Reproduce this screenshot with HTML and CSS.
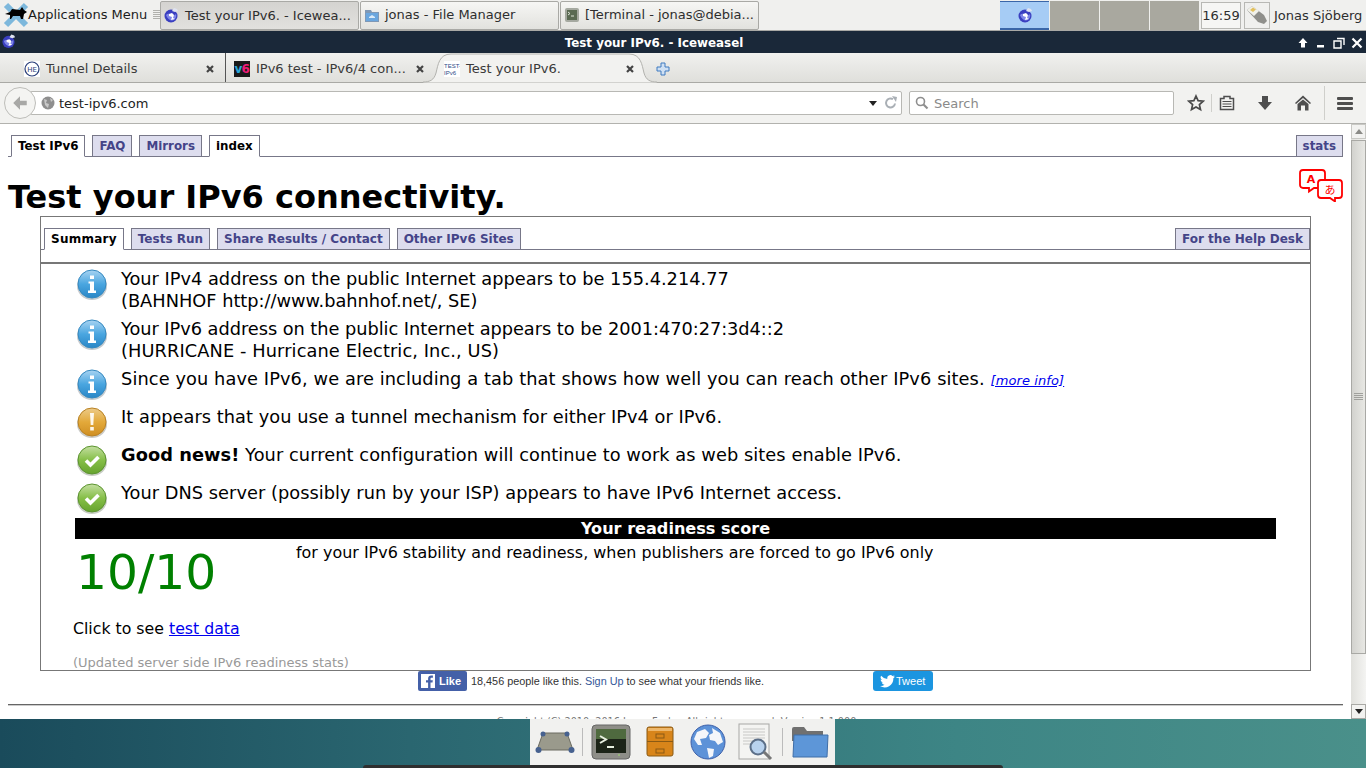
FILE: index.html
```html
<!DOCTYPE html>
<html lang="en">
  <head>
    <meta charset="UTF-8" />
    <title>Test your IPv6. - Iceweasel</title>
    <link rel="stylesheet" href="styles.css">
  </head>

  <body>
    <svg class="defs" width="0" height="0">
      <defs>
        <linearGradient id="gBlue" x1="0" y1="0" x2="0" y2="1">
          <stop offset="0" stop-color="#a9d4f2" /><stop offset="0.5" stop-color="#4aa6e0" /><stop offset="1" stop-color="#2a86c6" />
        </linearGradient>
        <linearGradient id="gOrange" x1="0" y1="0" x2="0" y2="1">
          <stop offset="0" stop-color="#eccb8a" /><stop offset="0.5" stop-color="#e3a93a" /><stop offset="1" stop-color="#cf8e22" />
        </linearGradient>
        <linearGradient id="gGreen" x1="0" y1="0" x2="0" y2="1">
          <stop offset="0" stop-color="#c4dfa2" /><stop offset="0.5" stop-color="#86bf48" /><stop offset="1" stop-color="#66a32e" />
        </linearGradient>
        <symbol id="weasel" viewBox="0 0 16 16">
          <circle cx="8" cy="9" r="6.500" fill="#3a3fc0" />
          <path d="M3 8c2-2 4-1 5 0s3 1 5-1c1 3-1 6-4 6.500-2 0-5-2-6-5.500z" fill="#7f86e8" />
          <path d="M6 7l3-1 2 2-1 3 2 1-4 1 1-3-3-1z" fill="#fff" />
          <path d="M9 4l2-3 3 1 1 2-3 1z" fill="#dfe3f0" />
        </symbol>
        <symbol id="close" viewBox="0 0 10 10">
          <path d="M2 2l6 6M8 2l-6 6" stroke="#444" stroke-width="2.200" fill="none" />
        </symbol>
        <symbol id="info" viewBox="0 0 32 32">
          <ellipse cx="16" cy="18" rx="15" ry="14" fill="#6d7a84" opacity="0.4" />
          <circle cx="16" cy="16" r="14" fill="url(#gBlue)" stroke="#3589c0" />
          <path d="M14 7.500h4v3.500h-4zM12.500 13.500h5.500v9h2v2.500h-8v-2.500h2v-7h-1.500z" fill="#fff" />
        </symbol>
        <symbol id="warn" viewBox="0 0 32 32">
          <ellipse cx="16" cy="18" rx="15" ry="14" fill="#7b7b70" opacity="0.4" />
          <circle cx="16" cy="16" r="14" fill="url(#gOrange)" stroke="#b98224" />
          <path d="M14 7h4l-.7 12h-2.600zM14.200 21h3.600v3.600h-3.600z" fill="#fff" opacity="0.9" />
        </symbol>
        <symbol id="ok" viewBox="0 0 32 32">
          <ellipse cx="16" cy="18" rx="15" ry="14" fill="#74806a" opacity="0.4" />
          <circle cx="16" cy="16" r="14" fill="url(#gGreen)" stroke="#5c9430" />
          <path d="M10 16.500l4.500 4.500 8-8" fill="none" stroke="#fff" stroke-width="3.600" />
        </symbol>
      </defs>
    </svg>

    <!-- xfce panel -->
    <div class="panel">
      <div class="appmenu">
        <svg class="xfce" viewBox="0 0 26 26">
          <path d="M3 3l20 20M23 3L3 23" stroke="#7db8dc" stroke-width="6" />
          <path d="M2 12l5-2 2-3 8 1 2-3 2 3 3 2-3 2-1 5h-2l-1-3-7 0-2 3H7l0-4z" fill="#000" />
        </svg>
        <span>Applications Menu</span>
      </div>
      <div class="grip"></div>
      <div class="tasks">
        <div class="task task-active"><svg class="ico16"><use href="#weasel" /></svg><span>Test your IPv6. - Icewea...</span></div>
        <div class="task">
          <svg class="ico16" viewBox="0 0 16 16"><path d="M1 3h6l1 2h7v10H1z" fill="#7f98b5" /><rect x="2" y="6" width="12" height="8" fill="#6aa6de" /><path d="M5 10l3-2 3 2v1H5z" fill="#dcebf8" /></svg>
          <span>jonas - File Manager</span>
        </div>
        <div class="task">
          <svg class="ico16" viewBox="0 0 16 16"><rect x="1" y="1" width="14" height="14" rx="2" fill="#a5a9a0" /><rect x="3" y="3" width="10" height="10" fill="#5a6a52" /><path d="M4 5l2 1.500L4 8M7 9h3" stroke="#dfe6d8" fill="none" /></svg>
          <span>[Terminal - jonas@debia...</span>
        </div>
      </div>
      <div class="pager">
        <div class="desk desk-on"><svg class="ico16"><use href="#weasel" /></svg></div>
        <div class="desk"></div>
        <div class="desk"></div>
        <div class="desk"></div>
      </div>
      <div class="clock">16:59</div>
      <div class="usb">
        <svg viewBox="0 0 24 24" width="24" height="24"><path d="M2 7l5-4 12 9 3 6-3 3-6-2z" fill="#8f8f8b" /><path d="M2 7l5-4 7 5-5 5z" fill="#f1f1ea" /><path d="M5 7l3-2.500 3 2-3 2.500z" fill="#e2c05e" /></svg>
      </div>
      <div class="user">Jonas Sjöberg</div>
    </div>

    <!-- window title -->
    <div class="titlebar">
      <svg class="title-ico"><use href="#weasel" /></svg>
      <div class="title-text">Test your IPv6. - Iceweasel</div>
      <div class="winbtns">
        <svg viewBox="0 0 12 12" width="12" height="12"><path d="M6 1l4.500 5H8v4.500H4V6H1.500z" fill="#fff" /></svg>
        <svg viewBox="0 0 12 12" width="12" height="12"><path d="M2 8h7v2.500H2z" fill="#fff" /></svg>
        <svg viewBox="0 0 12 12" width="12" height="12"><path d="M4 1.500h7v6.500M1 4h7v7H1z" fill="none" stroke="#fff" stroke-width="1.400" /></svg>
        <svg viewBox="0 0 12 12" width="12" height="12"><path d="M1.500 1.500l9 9M10.500 1.500l-9 9" stroke="#fff" stroke-width="2.200" /></svg>
      </div>
    </div>

    <!-- browser tabs -->
    <div class="tabbar">
      <div class="btab btab-first">
        <svg class="favicon" viewBox="0 0 16 16"><rect width="16" height="16" fill="#fff" /><circle cx="8" cy="8" r="7" fill="#fff" stroke="#2a3f7a" stroke-width="1.200" /><text x="8" y="11" class="fav-he">HE</text></svg>
        <span class="btab-label">Tunnel Details</span>
        <svg class="btab-close"><use href="#close" /></svg>
      </div>
      <div class="btab btab-second">
        <svg class="favicon" viewBox="0 0 16 16"><rect width="16" height="16" fill="#1a1a1a" /><text x="0.500" y="12" class="fav-v">v</text><text x="7.500" y="12" class="fav-six">6</text></svg>
        <span class="btab-label">IPv6 test - IPv6/4 con...</span>
        <svg class="btab-close"><use href="#close" /></svg>
      </div>
      <div class="btab btab-active">
        <svg class="tab-shape" viewBox="0 0 234 30" width="234" height="30"><path d="M0 29C7 29 11 27 13 20 15 12 16 1 28 1H206C218 1 219 12 221 20 223 27 227 29 234 29V30H0z" fill="#f2f2f0" stroke="#b2b2ae" /></svg>
        <svg class="favicon" viewBox="0 0 16 16"><rect width="16" height="16" fill="#fff" /><text x="0" y="6.500" class="fav-test">TEST-</text><text x="0" y="13.500" class="fav-test">IPv6</text></svg>
        <span class="btab-label">Test your IPv6.</span>
        <svg class="btab-close"><use href="#close" /></svg>
      </div>
      <svg class="newtab" viewBox="0 0 14 14" width="14" height="14"><path d="M5 1h4v4h4v4H9v4H5V9H1V5h4z" fill="#cfe0f3" stroke="#3f7ac0" /></svg>
    </div>

    <!-- location bar -->
    <div class="navbar">
      <div class="back">
        <svg viewBox="0 0 16 16" width="18" height="18"><path d="M8 2L2 8l6 6V10h6V6H8z" fill="#a8a8a6" /></svg>
      </div>
      <div class="urlbar">
        <svg class="globe" viewBox="0 0 14 14" width="14" height="14"><circle cx="7" cy="7" r="6.500" fill="#8e8e8e" /><path d="M3 3l3 1-1 3 3 1-1 4-3-3zM9 2l3 2-2 2z" fill="#c8c8c8" /></svg>
        <span class="url">test-ipv6.com</span>
        <span class="url-drop"></span>
        <svg viewBox="0 0 14 14" width="14" height="14"><path d="M11 7.500A4.500 4.500 0 1 1 9 3.200" fill="none" stroke="#a9afb5" stroke-width="2" /><path d="M8 0l5 1-1 5z" fill="#a9afb5" /></svg>
      </div>
      <div class="searchbar">
        <svg viewBox="0 0 14 14" width="14" height="14"><circle cx="5.500" cy="5.500" r="4" fill="none" stroke="#8e8e8e" stroke-width="1.600" /><path d="M8.500 8.500l4 4" stroke="#8e8e8e" stroke-width="2.200" /></svg>
        <span>Search</span>
      </div>
      <div class="tools">
        <svg class="tool-star" viewBox="0 0 18 18" width="18" height="18"><path d="M9 2l2.100 4.700 5.100.5-3.800 3.400 1.100 5L9 13l-4.500 2.600 1.100-5L1.800 7.200l5.100-.5z" fill="none" stroke="#4a4a4a" stroke-width="1.700" /></svg>
        <i class="tool-sep tool-sep-a"></i>
        <svg class="tool-list" viewBox="0 0 16 16" width="16" height="16"><path d="M1.500 3.500h3.500V1.500h6v2h3.500v11h-13z" fill="#f2f2f0" stroke="#4e4e4e" stroke-width="1.500" /><path d="M3.500 6.500h9M3.500 9h9M3.500 11.500h9" stroke="#4e4e4e" stroke-width="1.200" /></svg>
        <svg class="tool-down" viewBox="0 0 16 16" width="16" height="16"><path d="M5 1h6v6h4l-7 8-7-8h4z" fill="#4e4e4e" /></svg>
        <svg class="tool-home" viewBox="0 0 18 18" width="18" height="18"><path d="M9 1.500L1 9l1 1 7-6 7 6 1-1z" fill="#4e4e4e" /><path d="M3.500 10L9 5.500l5.500 4.500v6.500h-3.500v-5H7v5H3.500z" fill="#4e4e4e" /></svg>
        <i class="tool-sep tool-sep-b"></i>
        <div class="menu-btn"><b></b><b></b><b></b></div>
      </div>
    </div>

    <!-- the page itself -->
    <div class="content">
      <div class="page">
        <div class="ptabs">
          <a class="ptab ptab-on">Test IPv6</a>
          <a class="ptab">FAQ</a>
          <a class="ptab">Mirrors</a>
          <a class="ptab ptab-on">index</a>
          <a class="ptab ptab-right">stats</a>
        </div>

        <div class="headline">
          <h1>Test your IPv6 connectivity.</h1>
          <svg class="translate" viewBox="0 0 44 33" width="44" height="33">
            <path d="M4 1h19a3 3 0 0 1 3 3v12a3 3 0 0 1-3 3H15l-5 3.500V19H4a3 3 0 0 1-3-3V4a3 3 0 0 1 3-3z" fill="#fff" stroke="#f00" stroke-width="1.800" />
            <path d="M22 11h18a3 3 0 0 1 3 3v12a3 3 0 0 1-3 3h-4v3.500L31 29h-9a3 3 0 0 1-3-3V14a3 3 0 0 1 3-3z" fill="#fff" stroke="#f00" stroke-width="1.800" />
            <text x="12" y="14" class="tr-a">A</text>
            <text x="31" y="25" class="tr-b">あ</text>
          </svg>
        </div>

        <div class="box">
          <div class="ptabs ptabs-inner">
            <a class="ptab ptab-on ptab-wide">Summary</a>
            <a class="ptab">Tests Run</a>
            <a class="ptab">Share Results / Contact</a>
            <a class="ptab">Other IPv6 Sites</a>
            <a class="ptab ptab-right">For the Help Desk</a>
          </div>
          <div class="box-rule"></div>

          <div class="rows">
            <div class="row">
              <svg class="row-ico"><use href="#info" /></svg>
              <div>Your IPv4 address on the public Internet appears to be 155.4.214.77<br>(BAHNHOF http://www.bahnhof.net/, SE)</div>
            </div>
            <div class="row">
              <svg class="row-ico"><use href="#info" /></svg>
              <div><span class="tight">Your IPv6 address on the public Internet appears to be 2001:470:27:3d4::2</span><br><span class="loose">(HURRICANE - Hurricane Electric, Inc., US)</span></div>
            </div>
            <div class="row">
              <svg class="row-ico"><use href="#info" /></svg>
              <div class="loose">Since you have IPv6, we are including a tab that shows how well you can reach other IPv6 sites. <a class="more" href="#">[more info]</a></div>
            </div>
            <div class="row">
              <svg class="row-ico"><use href="#warn" /></svg>
              <div class="slight">It appears that you use a tunnel mechanism for either IPv4 or IPv6.</div>
            </div>
            <div class="row">
              <svg class="row-ico"><use href="#ok" /></svg>
              <div class="news"><b>Good news!</b> Your current configuration will continue to work as web sites enable IPv6.</div>
            </div>
            <div class="row">
              <svg class="row-ico"><use href="#ok" /></svg>
              <div class="slight">Your DNS server (possibly run by your ISP) appears to have IPv6 Internet access.</div>
            </div>
          </div>

          <div class="score-title">Your readiness score</div>
          <div class="score">
            <div class="score-num">10/10</div>
            <div class="score-text">for your IPv6 stability and readiness, when publishers are forced to go IPv6 only</div>
          </div>
          <div class="click">Click to see <a href="#">test data</a></div>
          <div class="updated">(Updated server side IPv6 readiness stats)</div>
        </div>

        <div class="social">
          <div class="fb-btn">
            <svg viewBox="0 0 14 14" width="14" height="14"><rect width="14" height="14" fill="#fff" /><path d="M9.500 14V8.500h2l.3-2.300H9.500V4.800c0-.7.200-1.100 1.100-1.100h1.300V1.600c-.5 0-1.100-.1-1.800-.1-1.800 0-3 1.100-3 3v1.700H5v2.300h2.100V14z" fill="#4460a8" /></svg>
            <span>Like</span>
          </div>
          <div class="fb-text">18,456 people like this. <span class="fb-link">Sign Up</span> to see what your friends like.</div>
          <div class="tw-btn">
            <svg viewBox="0 0 16 14" width="15" height="13"><path d="M16 1.700c-.6.300-1.200.400-1.900.500.700-.4 1.200-1 1.400-1.800-.6.400-1.300.600-2.100.8A3.300 3.300 0 0 0 7.800 4.200 9.300 9.300 0 0 1 1.100.8a3.300 3.300 0 0 0 1 4.400c-.5 0-1-.2-1.500-.4 0 1.600 1.100 2.900 2.600 3.200-.5.100-1 .2-1.500.1.400 1.300 1.600 2.200 3.100 2.300A6.600 6.600 0 0 1 0 11.800 9.300 9.300 0 0 0 14.300 3.500c.7-.5 1.300-1.100 1.700-1.800z" fill="#fff" /></svg>
            <span>Tweet</span>
          </div>
        </div>

        <div class="page-rule"></div>
        <div class="copyright">Copyright (C) 2010, 2016 Jason Fesler. All rights reserved. Version 1.1.000</div>
      </div>

      <div class="scrollbar">
        <div class="sb-btn"><span class="sb-up"></span></div>
        <div class="sb-track">
          <div class="sb-thumb"><i></i></div>
        </div>
        <div class="sb-btn sb-btn-down"><span class="sb-down"></span></div>
      </div>
    </div>

    <!-- desktop and dock -->
    <div class="desktop">
      <div class="dock">
        <svg class="dock-trap" viewBox="0 0 40 24" width="40" height="24"><path d="M8 3h24l6 17H2z" fill="#9a9a8c" stroke="#6a6a60" /><circle cx="8" cy="4" r="2.500" fill="#46618f" /><circle cx="32" cy="4" r="2.500" fill="#46618f" /><circle cx="3.500" cy="20" r="3" fill="#46618f" /><circle cx="36.500" cy="20" r="3" fill="#46618f" /></svg>
        <i class="dock-sep dock-sep-a"></i>
        <svg class="dock-term" viewBox="0 0 40 36" width="40" height="36"><rect x="1" y="1" width="38" height="34" rx="4" fill="#8e8e88" stroke="#666" /><rect x="5" y="5" width="30" height="24" fill="#1c2418" /><path d="M5 5h30v10H5z" fill="#4f6a3f" /><path d="M9 12l6 3.500L9 19M16 23h7" stroke="#e8f0e0" stroke-width="2" fill="none" /><path d="M27 31h2" stroke="#9fdc70" /></svg>
        <svg class="dock-cab" viewBox="0 0 30 32" width="30" height="32"><rect x="2" y="1" width="26" height="29" rx="2" fill="#d8851a" stroke="#8a5a14" /><path d="M3 2h24v3H3z" fill="#eeb76a" /><path d="M2 15.500h26" stroke="#8a5a14" /><rect x="11" y="8" width="8" height="4" fill="none" stroke="#8a5a14" /><rect x="11" y="23" width="8" height="4" fill="none" stroke="#8a5a14" /></svg>
        <svg class="dock-globe" viewBox="0 0 36 36" width="36" height="36"><circle cx="18" cy="18" r="17" fill="#5d92d8" stroke="#3d5fa8" /><path d="M7 8l8-3 4 4-3 5-6 1 2 6-4 0-4-6zM22 4l8 5 3 9-5 3-3-4-5-1-1-5 4-2zM17 24l7 1-1 7-4 2z" fill="#f4f6fa" /></svg>
        <svg class="dock-doc" viewBox="0 0 38 38" width="38" height="38"><rect x="1" y="1" width="30" height="35" fill="#f4f4f2" stroke="#a8a8a6" /><path d="M5 6h22M5 9h22M5 12h22M5 15h22M5 18h10M5 21h8" stroke="#c8c8c6" /><circle cx="20" cy="24" r="7.500" fill="#b8d2ee" stroke="#5c6f88" stroke-width="2" /><path d="M26 29l7 7" stroke="#777" stroke-width="3" /></svg>
        <i class="dock-sep dock-sep-b"></i>
        <svg class="dock-folder" viewBox="0 0 38 32" width="38" height="32"><path d="M1 3a2 2 0 0 1 2-2h10l3 4h16v10H1z" fill="#707070" /><path d="M3 9h34l-1 22H2z" fill="#5d96d8" stroke="#3f6ea8" /></svg>
      </div>
      <div class="plank"></div>
    </div>
  </body>
</html>
```

FILE: styles.css
```css
* {
  box-sizing: border-box;
}

html,
body {
  margin: 0;
  height: 768px;
  overflow: hidden;
}

body {
  width: 1366px;
  display: flex;
  flex-direction: column;
  font-family: "DejaVu Sans", sans-serif;
  color: #000;
  background: #fff;
}

.defs {
  position: absolute;
}

/* panel */
.panel {
  height: 31px;
  flex: none;
  display: flex;
  align-items: center;
  background: #f0f0ee;
  border-bottom: 1px solid #a9a9a5;
  font-size: 13px;
  color: #2e2e2e;
}

.appmenu {
  width: 153px;
  display: flex;
  align-items: center;
  padding-left: 3px;
  color: #1c1c1c;
}

.appmenu span {
  padding-bottom: 2px;
}

.xfce {
  width: 26px;
  height: 26px;
  margin-right: -1px;
}

.grip {
  width: 7px;
  height: 10px;
  background: repeating-linear-gradient(#b0b0ac 0 1px, transparent 1px 2px);
}

.tasks {
  display: flex;
  width: 840px;
}

.task {
  width: 199px;
  height: 29px;
  margin-right: 1px;
  display: flex;
  align-items: center;
  gap: 5px;
  padding: 0 0 0 3px;
  border: 1px solid #a9a9a5;
  border-radius: 2px;
  background: linear-gradient(#f6f6f4, #e2e2de);
}

.task span {
  padding-bottom: 2px;
}

.task-active {
  gap: 6px;
  padding-left: 2px;
  background: linear-gradient(#d4d3d0, #e2e1de);
}

.task-active span {
  padding-bottom: 0;
}

.ico16 {
  width: 16px;
  height: 16px;
  flex: none;
}

.pager {
  display: flex;
  gap: 1px;
}

.desk {
  width: 49px;
  height: 29px;
  background: #a9a89f;
}

.desk-on {
  display: flex;
  align-items: center;
  justify-content: center;
  background: #a6ccf5;
  border-top: 1px solid #3a66a8;
  border-bottom: 2px solid #3a66a8;
}

.clock {
  width: 40px;
  height: 27px;
  margin-left: 2px;
  display: flex;
  align-items: center;
  justify-content: center;
  border: 1px solid #b8b8b4;
  background: #f6f6f4;
}

.usb {
  width: 26px;
  height: 27px;
  margin-left: 3px;
  border: 1px solid #b8b8b4;
}

.user {
  margin-left: 4px;
  white-space: nowrap;
}

/* title */
.titlebar {
  height: 22px;
  flex: none;
  position: relative;
  display: flex;
  align-items: center;
  justify-content: center;
  background: #1a2839;
  color: #fff;
  font-size: 11.9px;
  font-weight: bold;
}

.title-ico {
  position: absolute;
  left: 1px;
  top: 2px;
  width: 15px;
  height: 16px;
}

.title-text {
  margin-left: -58px;
  padding-top: 2px;
}

.winbtns {
  position: absolute;
  right: 3px;
  top: 6px;
  display: flex;
  gap: 6px;
}

/* browser tabs */
.tabbar {
  height: 30px;
  flex: none;
  display: flex;
  align-items: center;
  background: linear-gradient(#f1f1ef, #dfdfdb);
  border-bottom: 1px solid #a9a9a5;
  font-size: 13px;
  color: #3a3a3a;
}

.btab {
  height: 29px;
  display: flex;
  align-items: center;
  flex: none;
}

.btab-first {
  width: 226px;
  padding: 2px 0 0 24px;
  border-right: 1px solid #555;
}

.btab-second {
  width: 209px;
  padding: 2px 0 0 8px;
}

.btab-active {
  width: 211px;
  height: 30px;
  margin-bottom: -1px;
  padding: 1px 0 0 9px;
  position: relative;
}

.tab-shape {
  position: absolute;
  left: -12px;
  top: 0;
}

.btab-active .favicon,
.btab-active .btab-label,
.btab-active .btab-close {
  position: relative;
}

.btab-active .btab-close {
  margin-right: 11px;
}

.favicon {
  width: 16px;
  height: 16px;
  flex: none;
  margin-right: 6px;
}

.fav-he {
  font: 7px "DejaVu Sans", sans-serif;
  fill: #2a3f7a;
  text-anchor: middle;
}

.fav-v {
  font: bold 12px "DejaVu Sans", sans-serif;
  fill: #2aa7d8;
}

.fav-six {
  font: bold 12px "DejaVu Sans", sans-serif;
  fill: #ee1a78;
}

.fav-test {
  font: 6px "Liberation Sans", sans-serif;
  fill: #2a4a86;
}

.btab-label {
  flex: 1;
  white-space: nowrap;
  font-size: 13px;
}

.btab-close {
  width: 10px;
  height: 10px;
  flex: none;
  margin-right: 10px;
}

.newtab {
  margin: 2px 0 0 10px;
}

/* location bar */
.navbar {
  height: 41px;
  flex: none;
  display: flex;
  align-items: center;
  position: relative;
  padding-left: 30px;
  background: #f2f2f0;
  border-bottom: 1px solid #b2b2ae;
  font-size: 13px;
}

.back {
  position: absolute;
  left: 4px;
  top: 4px;
  width: 32px;
  height: 32px;
  z-index: 1;
  display: flex;
  align-items: center;
  justify-content: center;
  border: 1px solid #bdbdb9;
  border-radius: 50%;
  background: #f4f4f2;
}

.urlbar {
  width: 872px;
  height: 24px;
  display: flex;
  align-items: center;
  padding: 0 3px 0 10px;
  background: #fff;
  border: 1px solid #b8b8b4;
  border-radius: 2px;
}

.globe {
  margin-right: 4px;
}

.url {
  flex: 1;
  color: #222;
}

.url-drop {
  width: 0;
  height: 0;
  margin-right: 7px;
  border: 4px solid transparent;
  border-top: 5px solid #222;
  border-bottom: 0;
}

.searchbar {
  width: 265px;
  height: 24px;
  margin-left: 7px;
  display: flex;
  align-items: center;
  gap: 5px;
  padding-left: 5px;
  background: #fff;
  border: 1px solid #b8b8b4;
  border-radius: 2px;
  color: #8a8a8a;
}

.tools {
  flex: 1;
  display: flex;
  align-items: center;
  padding-left: 13px;
}

.tool-sep {
  width: 1px;
  background: #cfcfcb;
  flex: none;
}

.tool-sep-a {
  height: 18px;
  margin-left: 6px;
  margin-right: 7px;
}

.tool-sep-b {
  height: 34px;
  margin-left: 12px;
  margin-right: 12px;
}

.tool-down {
  margin-left: 22px;
}

.tool-home {
  margin-left: 21px;
}

.menu-btn {
  display: flex;
  flex-direction: column;
  gap: 2px;
}

.menu-btn b {
  display: block;
  width: 16px;
  height: 3px;
  background: #4e4e4e;
  border-radius: 1px;
}

/* page */
.content {
  height: 595px;
  flex: none;
  display: flex;
  background: #fff;
}

.page {
  width: 1351px;
  padding: 11px 8px 0;
  overflow: hidden;
}

.ptabs {
  height: 22px;
  display: flex;
  gap: 7px;
  padding-left: 3px;
  border-bottom: 1px solid #778;
  font-size: 11.85px;
  font-weight: bold;
}

.ptab {
  height: 22px;
  padding: 2px 6px 0;
  line-height: 17px;
  color: #448;
  background: #dde;
  border: 1px solid #778;
  white-space: nowrap;
}

.ptab-on {
  color: #000;
  background: #fff;
  border-bottom-color: #fff;
}

.ptab-wide {
  letter-spacing: 0.25px;
}

.ptab-right {
  margin-left: auto;
}

.headline {
  height: 59px;
  display: flex;
  justify-content: space-between;
}

h1 {
  margin: 0;
  padding-top: 20px;
  font-size: 32px;
  line-height: 40px;
  font-weight: bold;
}

.translate {
  margin-top: 12px;
}

.tr-a {
  font: bold 11px "DejaVu Sans", sans-serif;
  fill: #f00;
  text-anchor: middle;
}

.tr-b {
  font: 11px "Noto Sans CJK JP", sans-serif;
  fill: #f00;
  text-anchor: middle;
}

.box {
  width: 1271px;
  height: 455px;
  margin-left: 32px;
  padding-top: 11px;
  border: 1px solid #777;
  overflow: hidden;
}

.ptabs-inner {
  padding: 0 0 0 3px;
  font-size: 12px;
}

.box-rule {
  height: 2px;
  margin-top: 12px;
  background: #777;
}

.rows {
  padding: 4px 0 0 35px;
  font-size: 17.78px;
  line-height: 22px;
}

.row {
  display: flex;
  min-height: 32px;
  margin-bottom: 6px;
}

.row:last-child {
  margin-bottom: 4px;
}

.row-ico {
  width: 32px;
  height: 32px;
  flex: none;
  margin-right: 13px;
}

.tight {
  letter-spacing: -0.04px;
}

.slight {
  letter-spacing: 0.04px;
}

.loose {
  letter-spacing: 0.1px;
}

.news {
  letter-spacing: 0.07px;
}

.more {
  font-size: 13px;
  font-style: italic;
  color: #00e;
}

.score-title {
  width: 1201px;
  height: 21px;
  margin: 0 0 0 34px;
  background: #000;
  color: #fff;
  font-size: 16.1px;
  font-weight: bold;
  line-height: 21px;
  text-align: center;
}

.score {
  height: 68px;
  display: flex;
  padding-left: 35px;
}

.score-num {
  width: 220px;
  padding-top: 4px;
  font-size: 48.7px;
  line-height: 58px;
  color: #008000;
}

.score-text {
  padding-top: 2px;
  font-size: 15.95px;
  line-height: 24px;
}

.click {
  margin: 11px 0 0 32px;
  font-size: 15.75px;
  line-height: 22px;
}

.click a {
  color: #00e;
  text-decoration: underline;
}

.updated {
  margin: 15px 0 0 32px;
  font-size: 13px;
  line-height: 16px;
  color: #999;
}

/* like and tweet */
.social {
  height: 20px;
  display: flex;
  align-items: center;
  padding-left: 410px;
  font-family: "Liberation Sans", sans-serif;
  font-size: 10.85px;
}

.fb-btn {
  width: 49px;
  height: 20px;
  display: flex;
  align-items: center;
  gap: 4px;
  padding-left: 3px;
  background: #4460a8;
  border-radius: 2px;
  color: #fff;
  font-size: 11px;
  font-weight: bold;
}

.fb-text {
  width: 406px;
  padding-left: 4px;
  color: #333;
}

.fb-link {
  color: #365899;
}

.tw-btn {
  width: 60px;
  height: 20px;
  display: flex;
  align-items: center;
  gap: 1px;
  padding-left: 7px;
  background: #1b95e0;
  border-radius: 3px;
  color: #fff;
  font-size: 11px;
}

.page-rule {
  height: 2px;
  margin-top: 13px;
  background: linear-gradient(#666 50%, #ccc 50%);
}

.copyright {
  margin-top: 10px;
  padding-left: 2px;
  font-size: 9.7px;
  text-align: center;
  color: #777;
}

/* scrollbar */
.scrollbar {
  width: 15px;
  display: flex;
  flex-direction: column;
  background: linear-gradient(90deg, #e0e0dc, #f4f4f2);
}

.sb-btn {
  height: 15px;
  display: flex;
  align-items: center;
  justify-content: center;
  background: #f2f2f0;
  border: 1px solid #c8c8c4;
}

.sb-btn-down {
  border-color: #a9a9a5;
}

.sb-up {
  border: 4px solid transparent;
  border-bottom: 5px solid #8a8a86;
  border-top: 0;
}

.sb-down {
  border: 4px solid transparent;
  border-top: 5px solid #222;
  border-bottom: 0;
}

.sb-track {
  flex: 1;
  padding-top: 1px;
}

.sb-thumb {
  height: 514px;
  display: flex;
  align-items: center;
  justify-content: center;
  border: 1px solid #a9a9a5;
  background: linear-gradient(90deg, #d2d2ce, #e8e8e4);
}

.sb-thumb i {
  width: 9px;
  height: 8px;
  background: repeating-linear-gradient(#a0a09c 0 1px, transparent 1px 2px);
}

/* desktop */
.desktop {
  flex: 1;
  display: flex;
  flex-direction: column;
  align-items: center;
  background: linear-gradient(90deg, #1a4b5b 0, #2a6670 30%, #3d8585 70%, #4a908a 100%);
}

.dock {
  width: 305px;
  height: 46px;
  margin-left: -1px;
  flex: none;
  display: flex;
  align-items: center;
  padding-left: 5px;
  background: #f1f1ef;
}

.dock svg {
  flex: none;
}

.dock-sep {
  width: 1px;
  height: 28px;
  background: #bbb;
  flex: none;
}

.dock-sep-a {
  margin: 0 8px 0 7px;
}

.dock-sep-b {
  margin: 0 8px 0 6px;
}

.dock-cab {
  margin-left: 14px;
}

.dock-globe {
  margin-left: 15px;
}

.dock-doc {
  margin-left: 12px;
}

.plank {
  width: 640px;
  height: 3px;
  flex: none;
  border-radius: 6px 6px 0 0;
  background: #2f2f2f;
}
```
